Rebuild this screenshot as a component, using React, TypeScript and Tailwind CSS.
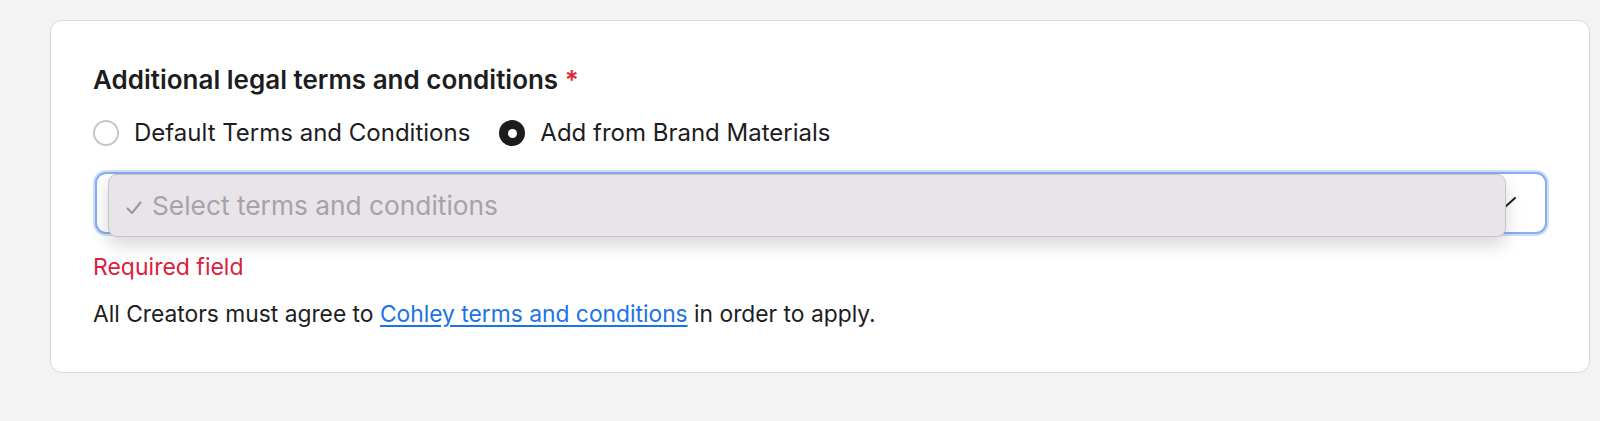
const FONT = { fontFamily: "Inter, 'Noto Sans', sans-serif" };

function Radio({ checked, label }: { checked: boolean; label: string }) {
  return (
    <label className="flex items-center gap-[15px]">
      {checked ? (
        <span className="flex h-[26px] w-[26px] items-center justify-center rounded-full bg-[#1c1c1e]">
          <span className="h-[9px] w-[9px] rounded-full bg-white" />
        </span>
      ) : (
        <span className="h-[26px] w-[26px] rounded-full border-2 border-[#c4c7cc] bg-white" />
      )}
      <span className="text-[24px] leading-[28px] text-[#1d1d1f]">{label}</span>
    </label>
  );
}

export default function App() {
  return (
    <div className="min-h-[421px] bg-[#f3f3f3] pt-[20px] pl-[50px] pr-[10px]" style={FONT}>
      <div className="h-[353px] rounded-[12px] border border-[#d9d9d9] bg-white pl-[42px] pr-[40px] pt-[43px]">
        <h2 className="text-[26px] font-semibold leading-[32px] text-[#1d1d1f]">
          Additional legal terms and conditions <span className="text-[#e0283c]">*</span>
        </h2>

        <div className="mt-[23px] flex items-center gap-[29px]">
          <Radio checked={false} label="Default Terms and Conditions" />
          <Radio checked label="Add from Brand Materials" />
        </div>

        <div className="relative mt-[23px] h-[66px]">
          <div className="absolute inset-[2px] rounded-[11px] border-2 border-[#86aef0] bg-white shadow-[0_0_0_2px_#cfe0fb]" />
          <svg
            className="absolute right-[33px] top-[27px]"
            width="24"
            height="14"
            viewBox="0 0 24 14"
            fill="none"
          >
            <path d="M1 1 L12 11 L23 1" stroke="#1f1f1f" strokeWidth="2" strokeLinecap="round" />
          </svg>
          <div className="absolute left-[15px] right-[43px] top-[4px] bottom-[-1px] flex items-center gap-[10px] rounded-[9px] border border-[#c7c4c8] bg-[#e9e4e9] pl-[17px] shadow-[0_8px_18px_rgba(0,0,0,0.16)]">
            <svg width="16" height="14" viewBox="0 0 16 14" fill="none" className="mt-[4px]">
              <path d="M1.5 7.5 L6 12 L14.5 1.5" stroke="#9a969b" strokeWidth="2" strokeLinecap="round" strokeLinejoin="round" />
            </svg>
            <span className="text-[26.3px] leading-[30px] text-[#a6a2a7]">Select terms and conditions</span>
          </div>
        </div>

        <p className="mt-[17px] text-[23px] leading-[28px] text-[#d9213d]">Required field</p>

        <p className="mt-[19px] text-[22.8px] leading-[28px] text-[#1d1d1f]">
          All Creators must agree to{" "}
          <a href="#" className="text-[#1a73e8] underline underline-offset-[3px]">
            Cohley terms and conditions
          </a>{" "}
          in order to apply.
        </p>
      </div>
    </div>
  );
}
